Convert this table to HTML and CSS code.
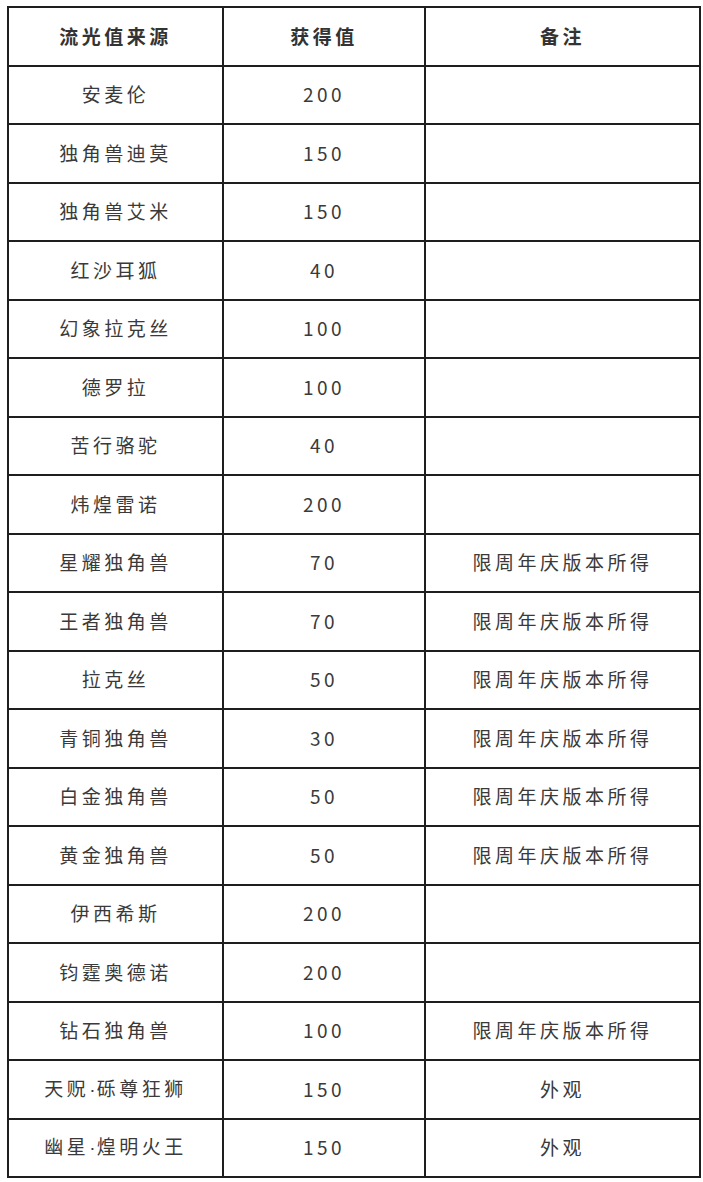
FILE: index.html
```html
<!DOCTYPE html>
<html lang="zh-CN">
<head>
<meta charset="utf-8">
<link rel="stylesheet" href="styles.css">
</head>
<body>
<table class="tbl">
  <colgroup><col class="c1"><col class="c2"><col class="c3"></colgroup>
  <thead>
    <tr><th>流光值来源</th><th>获得值</th><th>备注</th></tr>
  </thead>
  <tbody>
    <tr><td>安麦伦</td><td>200</td><td></td></tr>
    <tr><td>独角兽迪莫</td><td>150</td><td></td></tr>
    <tr><td>独角兽艾米</td><td>150</td><td></td></tr>
    <tr><td>红沙耳狐</td><td>40</td><td></td></tr>
    <tr><td>幻象拉克丝</td><td>100</td><td></td></tr>
    <tr><td>德罗拉</td><td>100</td><td></td></tr>
    <tr><td>苦行骆驼</td><td>40</td><td></td></tr>
    <tr><td>炜煌雷诺</td><td>200</td><td></td></tr>
    <tr><td>星耀独角兽</td><td>70</td><td>限周年庆版本所得</td></tr>
    <tr><td>王者独角兽</td><td>70</td><td>限周年庆版本所得</td></tr>
    <tr><td>拉克丝</td><td>50</td><td>限周年庆版本所得</td></tr>
    <tr><td>青铜独角兽</td><td>30</td><td>限周年庆版本所得</td></tr>
    <tr><td>白金独角兽</td><td>50</td><td>限周年庆版本所得</td></tr>
    <tr><td>黄金独角兽</td><td>50</td><td>限周年庆版本所得</td></tr>
    <tr><td>伊西希斯</td><td>200</td><td></td></tr>
    <tr><td>钧霆奥德诺</td><td>200</td><td></td></tr>
    <tr><td>钻石独角兽</td><td>100</td><td>限周年庆版本所得</td></tr>
    <tr><td>天贶<span class="dot">·</span>砾尊狂狮</td><td>150</td><td>外观</td></tr>
    <tr><td>幽星<span class="dot">·</span>煌明火王</td><td>150</td><td>外观</td></tr>
  </tbody>
</table>
</body>
</html>
```
FILE: styles.css
```css
html, body {
  margin: 0;
  padding: 0;
  background: #ffffff;
}
body {
  padding: 6px 0 0 7px;
  font-family: "Noto Sans CJK SC", "Noto Sans", sans-serif;
  color: #3a3a3a;
}
.tbl {
  border-collapse: collapse;
  width: 692px;
  table-layout: fixed;
}
.c1 { width: 215px; }
.c2 { width: 202px; }
.c3 { width: 275px; }
.tbl th, .tbl td {
  border: 2px solid #1e1e1e;
  height: 54.5px;
  padding: 0 0 2px 0;
  text-align: center;
  vertical-align: middle;
  font-size: 19px;
  letter-spacing: 3.5px;
  line-height: 1;
}
.tbl th {
  font-weight: 700;
  color: #333333;
}
.tbl td {
  font-weight: 400;
}
.dot {
  font-family: "Liberation Sans", sans-serif;
  letter-spacing: 1px;
}
```
